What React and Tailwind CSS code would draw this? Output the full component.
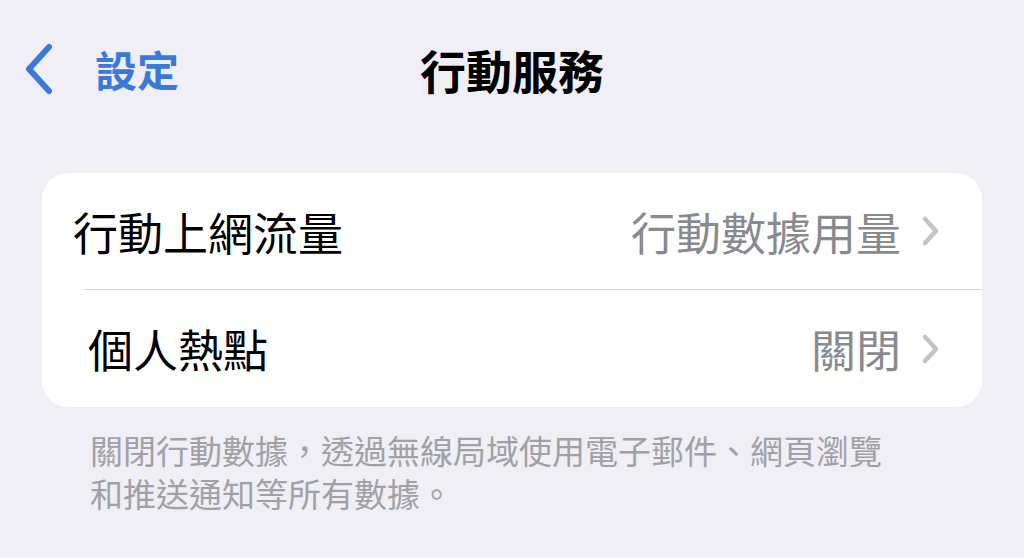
import React from "react";

const FONT = { fontFamily: '"Noto Sans CJK TC", "Noto Sans", sans-serif' };

function BackChevron() {
  return (
    <svg width="34" height="52" viewBox="0 0 34 52" className="shrink-0">
      <path d="M27 4 L7 26 L27 48" fill="none" stroke="#3b78dc" strokeWidth="6" strokeLinecap="round" strokeLinejoin="round" />
    </svg>
  );
}

function RowChevron() {
  return (
    <svg width="22" height="32" viewBox="0 0 22 32" className="shrink-0">
      <path d="M5 4 L16 16 L5 28" fill="none" stroke="#c4c4c7" strokeWidth="4.5" strokeLinecap="round" strokeLinejoin="round" />
    </svg>
  );
}

function Row({ label, value, indent }) {
  return (
    <div className={`flex items-center h-full pr-[40px] ${indent}`}>
      <span className="text-[45px] leading-none text-black">{label}</span>
      <span className="ml-auto text-[45px] leading-none text-[#8a8a8e]">{value}</span>
      <span className="ml-[19px]">
        <RowChevron />
      </span>
    </div>
  );
}

export default function App() {
  return (
    <div className="w-[1024px] h-[558px] overflow-hidden bg-[#f0eff5]" style={FONT}>
      {/* nav bar */}
      <div className="grid grid-cols-[1fr_auto_1fr] items-center h-[140px] pb-[2px]">
        <div className="flex items-center pl-[22px] gap-[39px]">
          <BackChevron />
          <span className="text-[42px] font-bold leading-none text-[#3b78dc]">設定</span>
        </div>
        <span className="text-[46px] font-bold leading-none text-black">行動服務</span>
        <div />
      </div>

      {/* group */}
      <div className="mt-[33px] mx-[42px] bg-white rounded-[26px] overflow-hidden">
        <div className="h-[116px]">
          <Row label="行動上網流量" value="行動數據用量" indent="pl-[31px]" />
        </div>
        <div className="ml-[42px] h-px bg-[#d4d4d8]" />
        <div className="h-[117px]">
          <Row label="個人熱點" value="關閉" indent="pl-[46px]" />
        </div>
      </div>

      {/* footer */}
      <div className="pl-[90px] pr-[120px] pt-[22px] text-[33px] leading-[43px] text-[#a1a1a5]">
        <p>關閉行動數據，透過無線局域使用電子郵件、網頁瀏覽</p>
        <p>和推送通知等所有數據。</p>
      </div>
    </div>
  );
}
